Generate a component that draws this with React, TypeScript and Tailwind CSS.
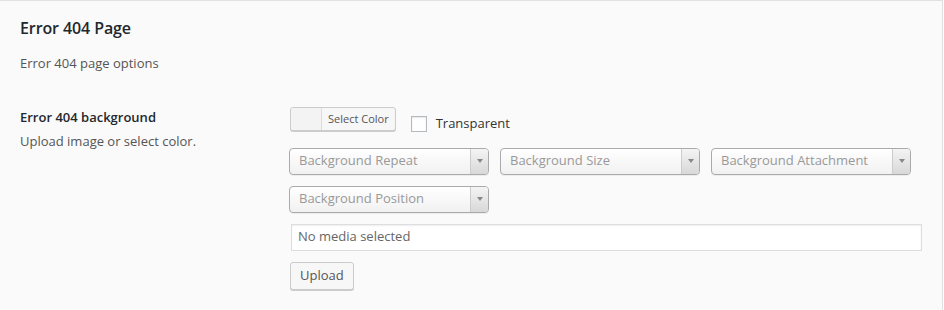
function Select({ label }: { label: string }) {
  return (
    <div className="w-[200px] h-[27px] flex items-stretch rounded-[4px] border border-[#aaa] bg-gradient-to-b from-white to-[#f1f1f1] shadow-[0_1px_0_rgba(0,0,0,0.05)] overflow-hidden">
      <div className="flex-1 pl-[9px] flex items-center text-[13px] text-[#999] truncate">{label}</div>
      <div className="w-[18px] border-l border-[#ccc] bg-gradient-to-b from-[#f4f4f4] to-[#d8d8d8] flex items-center justify-center">
        <svg width="6" height="4" viewBox="0 0 6 4">
          <path d="M0 0h6L3 4z" fill="#888" />
        </svg>
      </div>
    </div>
  );
}

export default function App() {
  return (
    <div
      className="w-[944px] h-[310px] bg-white overflow-hidden"
      style={{ fontFamily: '"Open Sans", "Noto Sans", sans-serif' }}
    >
      <div className="w-[943px] h-full bg-[#fafafa] border-t border-r border-[#e1e1e1] px-5 pt-[17px]">
        <h2 className="text-[16px] font-semibold text-[#23282d] leading-[20px] tracking-[-0.1px]">Error 404 Page</h2>
        <p className="mt-[16px] text-[13px] text-[#555] leading-[18px]">Error 404 page options</p>

        <div className="mt-[34px] flex">
          <div className="w-[271px] pt-[2px]">
            <div className="text-[13px] font-semibold text-[#23282d] leading-[18px]">Error 404 background</div>
            <div className="mt-[6px] text-[13px] text-[#555] leading-[18px]">Upload image or select color.</div>
          </div>

          <div className="flex flex-col mt-[1px]">
            <div className="flex items-start ml-[1px]">
              <div className="flex h-[24px] rounded-[3px] border border-[#ccc] bg-[#f7f7f7] shadow-[0_1px_0_#ccc] overflow-hidden">
                <div className="w-[31px] border-r border-[#ddd] bg-[#f3f3f3]" />
                <div className="px-[6px] flex items-center text-[11px] text-[#555]">Select Color</div>
              </div>
              <div className="ml-[15px] mt-[7px] flex items-center">
                <div className="w-[16px] h-[16px] border border-[#b4b9be] bg-white shadow-[inset_0_1px_2px_rgba(0,0,0,0.1)]" />
                <span className="ml-[9px] text-[13px] text-[#333]">Transparent</span>
              </div>
            </div>

            <div className="mt-[14px] flex gap-[11px]">
              <Select label="Background Repeat" />
              <Select label="Background Size" />
              <Select label="Background Attachment" />
            </div>
            <div className="mt-[11px] flex">
              <Select label="Background Position" />
            </div>

            <div className="mt-[11px] ml-[2px] w-[631px] h-[27px] border border-[#ddd] bg-white shadow-[inset_0_1px_2px_rgba(0,0,0,0.07)] flex items-center pl-[6px] text-[13px] text-[#666]">
              No media selected
            </div>

            <div className="mt-[11px] ml-[1px]">
              <button className="h-[28px] px-[9px] rounded-[3px] border border-[#ccc] bg-[#f7f7f7] shadow-[0_1px_0_#ccc] text-[13px] text-[#555]">
                Upload
              </button>
            </div>
          </div>
        </div>
      </div>
    </div>
  );
}
